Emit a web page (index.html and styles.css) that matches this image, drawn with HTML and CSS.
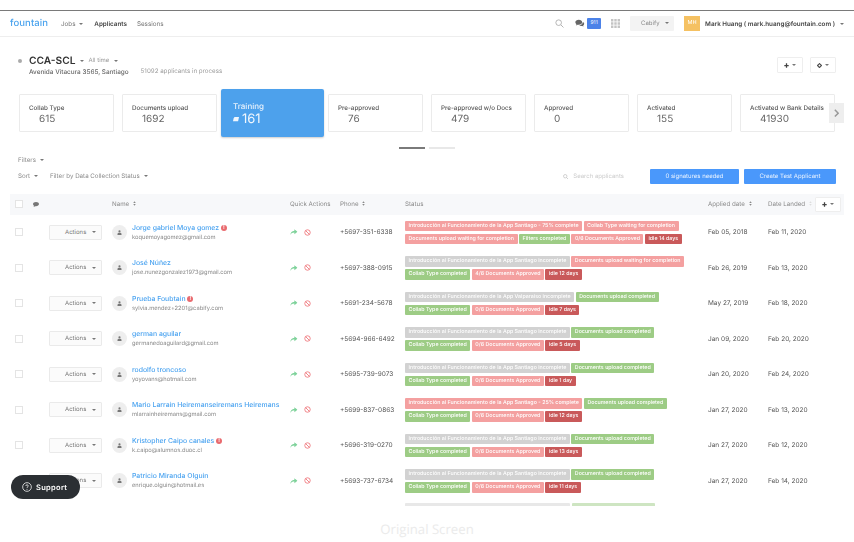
FILE: index.html
```html
<!DOCTYPE html>
<html lang="en">
<head>
    <meta charset="UTF-8">
    <title>Fountain - Applicants</title>
    <link rel="stylesheet" href="styles.css">
</head>
<body>
    <svg class="defs" width="0" height="0">
        <symbol id="i-search" viewBox="0 0 16 16"><circle cx="6.5" cy="6.5" r="5" fill="none" stroke="currentColor" stroke-width="1.5"/><path d="M10.5 10.5L15 15" stroke="currentColor" stroke-width="1.6"/></symbol>
        <symbol id="i-chat" viewBox="0 0 16 14"><path fill="currentColor" d="M6 1C3 1 .5 2.8.5 5c0 1.2.7 2.2 1.8 3l-.8 2 2.6-1.1c.6.2 1.2.2 1.9.2 3 0 5.500-1.800 5.500-4.100S9 1 6 1z"/><path fill="currentColor" d="M12.500 4.500c.1 2.800-2.600 5-5.800 5.400.8.800 2 1.200 3.300 1.200.5 0 1 0 1.500-.2l2.200 1-.6-1.800c1-.7 1.600-1.600 1.600-2.700 0-1.300-.9-2.300-2.200-2.900z"/></symbol>
        <symbol id="i-note" viewBox="0 0 12 10"><path fill="currentColor" d="M6 0C2.700 0 0 1.800 0 4.200c0 1.300.8 2.400 2 3.100L1.200 10l3.200-1.700c.5.1 1 .1 1.600.1 3.300 0 6-1.900 6-4.200S9.300 0 6 0z"/></symbol>
        <symbol id="i-grid" viewBox="0 0 9 9"><path fill="currentColor" d="M0 0h2.400v2.400H0zM3.300 0h2.400v2.400H3.300zM6.600 0H9v2.400H6.600zM0 3.300h2.400v2.400H0zM3.300 3.300h2.400v2.400H3.300zM6.600 3.300H9v2.400H6.600zM0 6.600h2.400V9H0zM3.300 6.600h2.400V9H3.300zM6.600 6.600H9V9H6.600z"/></symbol>
        <symbol id="i-plus" viewBox="0 0 8 8"><path d="M4 .5v7M.5 4h7" stroke="currentColor" stroke-width="2"/></symbol>
        <symbol id="i-gear" viewBox="0 0 8 8"><circle cx="4" cy="4" r="2.500" fill="none" stroke="currentColor" stroke-width="1.800"/><path d="M4 0v1.500M4 6.500V8M0 4h1.500M6.500 4H8" stroke="currentColor" stroke-width="1.400"/></symbol>
        <symbol id="i-user" viewBox="0 0 10 10"><circle cx="5" cy="2.700" r="2.200" fill="currentColor"/><path fill="currentColor" d="M1 10V7.800C1 6.500 2.400 5.500 5 5.500s4 1 4 2.300V10z"/></symbol>
        <symbol id="i-share" viewBox="0 0 12 10"><path fill="currentColor" d="M7 0l5 4-5 4V5.500C4 5.500 2 6.500.5 9.500.8 5.500 3 2.800 7 2.500z"/></symbol>
        <symbol id="i-ban" viewBox="0 0 10 10"><circle cx="5" cy="5" r="3.900" fill="none" stroke="currentColor" stroke-width="1.300"/><path d="M2.300 2.300l5.400 5.400" stroke="currentColor" stroke-width="1.300"/></symbol>
        <symbol id="i-sort" viewBox="0 0 6 9"><path fill="currentColor" d="M3 0l2.500 3.500h-5zM3 9L.5 5.500h5z"/></symbol>
        <symbol id="i-card" viewBox="0 0 10 8"><path fill="currentColor" d="M2.500 0H10L8.500 7H0L1 2.500z"/></symbol>
    </svg>

    <div class="screen">
        <header class="nav">
            <span class="logo">fountain</span>
            <a class="nav-link">Jobs <i class="caret"></i></a>
            <a class="nav-link nav-active">Applicants</a>
            <a class="nav-link">Sessions</a>
            <div class="nav-right">
                <svg class="ic-search"><use href="#i-search"/></svg>
                <svg class="ic-chat"><use href="#i-chat"/></svg>
                <span class="badge">911</span>
                <svg class="ic-grid"><use href="#i-grid"/></svg>
                <span class="company">Cabify <i class="caret"></i></span>
                <span class="avatar">MH</span>
                <span class="user">Mark Huang ( mark.huang@fountain.com )</span>
                <i class="caret"></i>
            </div>
        </header>

        <section class="job-head">
            <span class="job-dot"></span>
            <div class="job-info">
                <div class="job-title"><h1>CCA-SCL</h1><i class="caret"></i><span class="range">All time</span><i class="caret"></i></div>
                <div class="job-sub"><span>Avenida Vitacura 3565, Santiago</span><span class="in-process">51092 applicants in process</span></div>
            </div>
            <div class="job-btns">
                <button class="btn-light"><svg class="ic-small"><use href="#i-plus"/></svg><i class="caret"></i></button>
                <button class="btn-light"><svg class="ic-small"><use href="#i-gear"/></svg><i class="caret"></i></button>
            </div>
        </section>

        <section class="stages">
            <div class="stage"><div class="stage-name">Collab Type</div><div class="stage-num">615</div></div>
            <div class="stage"><div class="stage-name">Documents upload</div><div class="stage-num">1692</div></div>
            <div class="stage stage-active"><div class="stage-name">Training</div><div class="stage-num"><svg class="ic-card"><use href="#i-card"/></svg>161</div></div>
            <div class="stage"><div class="stage-name">Pre-approved</div><div class="stage-num">76</div></div>
            <div class="stage"><div class="stage-name">Pre-approved w/o Docs</div><div class="stage-num">479</div></div>
            <div class="stage"><div class="stage-name">Approved</div><div class="stage-num">0</div></div>
            <div class="stage"><div class="stage-name">Activated</div><div class="stage-num">155</div></div>
            <div class="stage"><div class="stage-name">Activated w Bank Details</div><div class="stage-num">41930</div></div>
            <button class="stage-next"><svg viewBox="0 0 6 10"><path d="M1 1l4 4-4 4" fill="none" stroke="currentColor" stroke-width="1.800"/></svg></button>
        </section>

        <div class="pager"><span class="pager-on"></span><span></span></div>

        <section class="filters">
            <div class="filter-line">Filters <i class="caret"></i></div>
            <div class="tools">
                <span class="filter-item">Sort <i class="caret"></i></span>
                <span class="filter-item">Filter by Data Collection Status <i class="caret"></i></span>
                <span class="search"><svg class="ic-search-sm"><use href="#i-search"/></svg>Search applicants</span>
                <button class="btn-blue btn-sign">0 signatures needed</button>
                <button class="btn-blue btn-test">Create Test Applicant</button>
            </div>
        </section>

        <section class="table">
            <div class="row head">
                <div class="cell-check"><span class="check"></span><svg class="ic-note"><use href="#i-note"/></svg></div>
                <div></div>
                <div>Name <svg class="ic-sort"><use href="#i-sort"/></svg></div>
                <div>Quick Actions</div>
                <div>Phone <svg class="ic-sort"><use href="#i-sort"/></svg></div>
                <div>Status</div>
                <div>Applied date <svg class="ic-sort"><use href="#i-sort"/></svg></div>
                <div class="cell-landed"><span>Date Landed <svg class="ic-sort ic-faint"><use href="#i-sort"/></svg></span><button class="btn-light btn-add"><svg class="ic-small"><use href="#i-plus"/></svg><i class="caret"></i></button></div>
            </div>

            <div class="row">
                <div class="cell-check"><span class="check"></span></div>
                <div class="cell-actions"><button class="btn-actions">Actions <i class="caret"></i></button></div>
                <div class="person">
                    <span class="person-pic"><svg><use href="#i-user"/></svg></span>
                    <div><div class="person-name">Jorge gabriel Moya gomez <span class="alert">!</span></div><div class="person-mail">koquemoyagomez@gmail.com</div></div>
                </div>
                <div class="quick"><svg class="ic-share"><use href="#i-share"/></svg><svg class="ic-ban"><use href="#i-ban"/></svg></div>
                <div class="phone">+5697-351-6338</div>
                <div class="tags"><span class="tag pink">Introducción al Funcionamiento de la App Santiago - 75% complete</span><span class="tag pink">Collab Type waiting for completion</span><span class="tag pink">Documents upload waiting for completion</span><span class="tag green">Filters completed</span><span class="tag pink">0/6 Documents Approved</span><span class="tag red">idle 14 days</span></div>
                <div class="date">Feb 05, 2018</div>
                <div class="date">Feb 11, 2020</div>
            </div>

            <div class="row">
                <div class="cell-check"><span class="check"></span></div>
                <div class="cell-actions"><button class="btn-actions">Actions <i class="caret"></i></button></div>
                <div class="person">
                    <span class="person-pic"><svg><use href="#i-user"/></svg></span>
                    <div><div class="person-name">José Núñez</div><div class="person-mail">jose.nunezgonzalez1973@gmail.com</div></div>
                </div>
                <div class="quick"><svg class="ic-share"><use href="#i-share"/></svg><svg class="ic-ban"><use href="#i-ban"/></svg></div>
                <div class="phone">+5697-388-0915</div>
                <div class="tags"><span class="tag gray">Introducción al Funcionamiento de la App Santiago incomplete</span><span class="tag pink">Documents upload waiting for completion</span><span class="tag green">Collab Type completed</span><span class="tag pink">4/6 Documents Approved</span><span class="tag red">idle 12 days</span></div>
                <div class="date">Feb 26, 2019</div>
                <div class="date">Feb 13, 2020</div>
            </div>

            <div class="row">
                <div class="cell-check"><span class="check"></span></div>
                <div class="cell-actions"><button class="btn-actions">Actions <i class="caret"></i></button></div>
                <div class="person">
                    <span class="person-pic"><svg><use href="#i-user"/></svg></span>
                    <div><div class="person-name">Prueba Foubtain <span class="alert">!</span></div><div class="person-mail">sylvia.mendez+2201@cabify.com</div></div>
                </div>
                <div class="quick"><svg class="ic-share"><use href="#i-share"/></svg><svg class="ic-ban"><use href="#i-ban"/></svg></div>
                <div class="phone">+5691-234-5678</div>
                <div class="tags"><span class="tag gray">Introducción al Funcionamiento de la App Valparaíso incomplete</span><span class="tag green">Documents upload completed</span><span class="tag green">Collab Type completed</span><span class="tag pink">0/6 Documents Approved</span><span class="tag red">idle 7 days</span></div>
                <div class="date">May 27, 2019</div>
                <div class="date">Feb 18, 2020</div>
            </div>

            <div class="row">
                <div class="cell-check"><span class="check"></span></div>
                <div class="cell-actions"><button class="btn-actions">Actions <i class="caret"></i></button></div>
                <div class="person">
                    <span class="person-pic"><svg><use href="#i-user"/></svg></span>
                    <div><div class="person-name">german aguilar</div><div class="person-mail">germanedoaguilard@gmail.com</div></div>
                </div>
                <div class="quick"><svg class="ic-share"><use href="#i-share"/></svg><svg class="ic-ban"><use href="#i-ban"/></svg></div>
                <div class="phone">+5694-966-6492</div>
                <div class="tags"><span class="tag gray">Introducción al Funcionamiento de la App Santiago incomplete</span><span class="tag green">Documents upload completed</span><span class="tag green">Collab Type completed</span><span class="tag pink">0/6 Documents Approved</span><span class="tag red">idle 5 days</span></div>
                <div class="date">Jan 09, 2020</div>
                <div class="date">Feb 20, 2020</div>
            </div>

            <div class="row">
                <div class="cell-check"><span class="check"></span></div>
                <div class="cell-actions"><button class="btn-actions">Actions <i class="caret"></i></button></div>
                <div class="person">
                    <span class="person-pic"><svg><use href="#i-user"/></svg></span>
                    <div><div class="person-name">rodolfo troncoso</div><div class="person-mail">yoyovans@hotmail.com</div></div>
                </div>
                <div class="quick"><svg class="ic-share"><use href="#i-share"/></svg><svg class="ic-ban"><use href="#i-ban"/></svg></div>
                <div class="phone">+5695-739-9073</div>
                <div class="tags"><span class="tag gray">Introducción al Funcionamiento de la App Santiago incomplete</span><span class="tag green">Documents upload completed</span><span class="tag green">Collab Type completed</span><span class="tag pink">0/6 Documents Approved</span><span class="tag red">idle 1 day</span></div>
                <div class="date">Jan 20, 2020</div>
                <div class="date">Feb 24, 2020</div>
            </div>

            <div class="row">
                <div class="cell-check"><span class="check"></span></div>
                <div class="cell-actions"><button class="btn-actions">Actions <i class="caret"></i></button></div>
                <div class="person">
                    <span class="person-pic"><svg><use href="#i-user"/></svg></span>
                    <div><div class="person-name">Mario Larrain Heiremanseiremans Heiremans</div><div class="person-mail">mlarrainheiremans@gmail.com</div></div>
                </div>
                <div class="quick"><svg class="ic-share"><use href="#i-share"/></svg><svg class="ic-ban"><use href="#i-ban"/></svg></div>
                <div class="phone">+5699-837-0863</div>
                <div class="tags"><span class="tag pink">Introducción al Funcionamiento de la App Santiago - 25% complete</span><span class="tag green">Documents upload completed</span><span class="tag green">Collab Type completed</span><span class="tag pink">0/6 Documents Approved</span><span class="tag red">idle 12 days</span></div>
                <div class="date">Jan 27, 2020</div>
                <div class="date">Feb 13, 2020</div>
            </div>

            <div class="row">
                <div class="cell-check"><span class="check"></span></div>
                <div class="cell-actions"><button class="btn-actions">Actions <i class="caret"></i></button></div>
                <div class="person">
                    <span class="person-pic"><svg><use href="#i-user"/></svg></span>
                    <div><div class="person-name">Kristopher Caipo canales <span class="alert">!</span></div><div class="person-mail">k.caipo@alumnos.duoc.cl</div></div>
                </div>
                <div class="quick"><svg class="ic-share"><use href="#i-share"/></svg><svg class="ic-ban"><use href="#i-ban"/></svg></div>
                <div class="phone">+5696-319-0270</div>
                <div class="tags"><span class="tag gray">Introducción al Funcionamiento de la App Santiago incomplete</span><span class="tag green">Documents upload completed</span><span class="tag green">Collab Type completed</span><span class="tag pink">0/6 Documents Approved</span><span class="tag red">idle 13 days</span></div>
                <div class="date">Jan 27, 2020</div>
                <div class="date">Feb 12, 2020</div>
            </div>

            <div class="row">
                <div class="cell-check"><span class="check"></span></div>
                <div class="cell-actions"><button class="btn-actions">Actions <i class="caret"></i></button></div>
                <div class="person">
                    <span class="person-pic"><svg><use href="#i-user"/></svg></span>
                    <div><div class="person-name">Patricio Miranda Olguin</div><div class="person-mail">enrique.olguin@hotmail.es</div></div>
                </div>
                <div class="quick"><svg class="ic-share"><use href="#i-share"/></svg><svg class="ic-ban"><use href="#i-ban"/></svg></div>
                <div class="phone">+5693-737-6734</div>
                <div class="tags"><span class="tag gray">Introducción al Funcionamiento de la App Santiago incomplete</span><span class="tag green">Documents upload completed</span><span class="tag green">Collab Type completed</span><span class="tag pink">0/6 Documents Approved</span><span class="tag red">idle 11 days</span></div>
                <div class="date">Jan 27, 2020</div>
                <div class="date">Feb 14, 2020</div>
            </div>

            <div class="row row-cut">
                <div></div><div></div><div></div><div></div><div></div>
                <div class="tags"><span class="tag gray tag-cut-a"></span><span class="tag green tag-cut-b"></span></div>
            </div>
        </section>

        <button class="support"><svg viewBox="0 0 12 12"><circle cx="6" cy="6" r="5.200" fill="none" stroke="currentColor" stroke-width="0.900"/><path d="M4.500 4.800C4.500 3.900 5.200 3.300 6 3.300s1.500.6 1.500 1.400C7.500 5.800 6 5.800 6 7.100" fill="none" stroke="currentColor" stroke-width="0.900"/><circle cx="6" cy="8.800" r="0.600" fill="currentColor"/></svg>Support</button>
    </div>

    <footer class="caption">Original Screen</footer>
</body>
</html>
```

FILE: styles.css
```css
* { box-sizing: border-box; }
html, body { margin: 0; padding: 0; }
body {
    width: 854px;
    height: 542px;
    overflow: hidden;
    background: #fff;
    font-family: Inter, "Liberation Sans", sans-serif;
    color: #555;
    text-rendering: geometricPrecision;
}
button { font-family: inherit; cursor: pointer; text-rendering: inherit; }
.defs { position: absolute; }

.screen {
    position: relative;
    height: 506px;
    padding-top: 10px;
    overflow: hidden;
    filter: blur(0.35px);
}

.caret {
    display: inline-block;
    width: 0;
    height: 0;
    margin-left: 2px;
    vertical-align: middle;
    border-left: 2px solid transparent;
    border-right: 2px solid transparent;
    border-top: 2px solid #777;
}

/* top bar */
.nav {
    display: flex;
    align-items: center;
    height: 27px;
    padding: 0 10px;
    border-top: 1.5px solid #7a7a7a;
    border-bottom: 1px solid #eee;
    font-size: 6.300px;
}
.logo { width: 51px; font-size: 9.500px; font-weight: 500; color: #4aa3ee; letter-spacing: 0.1px; }
.nav-link { margin-right: 10px; color: #777; }
.nav-link:nth-child(2) { margin-right: 11px; }
.nav-active { color: #444; font-weight: 600; }
.nav-right { display: flex; align-items: center; margin-left: auto; color: #999; }
.ic-search { width: 9px; height: 9px; margin-right: 11px; color: #aaa; }
.ic-chat { width: 10px; height: 9px; margin-right: 2px; color: #666; }
.badge { width: 14px; height: 11px; margin-right: 10px; background: #4c82e8; border-radius: 1px; color: #fff; font-size: 5px; line-height: 11px; text-align: center; }
.ic-grid { width: 9px; height: 9px; margin-right: 10px; color: #c4c4c4; }
.company { width: 44px; height: 15px; margin-right: 10px; padding-left: 11px; background: #f3f3f3; border-radius: 1px; color: #888; font-size: 6px; line-height: 15px; }
.company .caret { margin-left: 4px; }
.avatar { width: 16px; height: 15px; margin-right: 5px; background: #f5c162; color: #fff; font-size: 5.500px; line-height: 15px; text-align: center; }
.user { margin-right: 3px; color: #444; font-size: 6.300px; font-weight: 600; }

/* job heading */
.job-head {
    display: flex;
    align-items: flex-start;
    height: 52px;
    padding: 17px 18px 0;
}
.job-dot { width: 4px; height: 4px; margin: 5px 7px 0 0; background: #aaa; border-radius: 50%; }
.job-title { display: flex; align-items: center; height: 13px; }
.job-title h1 { margin: 0 3px 0 0; color: #333; font-size: 10.200px; font-weight: 600; }
.range { margin: 0 3px 0 4px; color: #999; font-size: 6px; }
.job-sub { display: flex; gap: 12px; margin-top: 1px; color: #999; font-size: 6.200px; }
.job-sub span:first-child { color: #666; font-size: 6.400px; font-weight: 500; }
.job-btns { display: flex; gap: 7px; margin: 3px 0 0 auto; }
.btn-light {
    display: flex;
    align-items: center;
    justify-content: center;
    width: 26px;
    height: 16px;
    padding: 0;
    background: #fff;
    border: 1px solid #eee;
    border-radius: 1px;
    color: #444;
}
.ic-small { width: 5px; height: 5px; margin-right: 1px; }

/* stage cards */
.stages {
    position: relative;
    display: flex;
    align-items: center;
    gap: 8px;
    height: 48px;
    padding-left: 19px;
}
.stage {
    flex: none;
    width: 95px;
    height: 38px;
    padding: 9px 0 0 9px;
    background: #fff;
    border: 1px solid #ebebeb;
    border-radius: 1px;
    white-space: nowrap;
}
.stage-name { color: #555; font-size: 6.250px; font-weight: 500; line-height: 8px; }
.stage-num { margin: 2px 0 0 10px; color: #666; font-size: 10px; line-height: 11px; }
.stage-active {
    width: 103px;
    height: 48px;
    margin: 0 -4px;
    padding: 12px 0 0 12px;
    background: #4da1ec;
    border: none;
    border-radius: 2px;
    box-shadow: 0 1px 2px rgba(0, 0, 0, 0.2);
}
.stage-active .stage-name { color: #e8f2fc; font-size: 8px; line-height: 11px; }
.stage-active .stage-num { margin: 0; color: #f0f6fd; font-size: 13px; line-height: 14px; }
.ic-card { width: 6px; height: 5px; margin-right: 3px; vertical-align: 1px; }
.stage-next {
    position: absolute;
    top: 14px;
    left: 829px;
    width: 15px;
    height: 20px;
    padding: 0 5px;
    background: #eee;
    border: none;
    color: #999;
}
.stage-next svg { display: block; }

.pager { display: flex; justify-content: center; gap: 4px; margin-top: 10px; }
.pager span { width: 26px; height: 2px; background: #e8e8e8; }
.pager .pager-on { background: #7a7a7a; }

/* filters */
.filters { padding: 7px 18px 0; color: #888; font-size: 6.200px; }
.filter-line { height: 10px; line-height: 10px; }
.tools { display: flex; align-items: center; height: 15px; margin-top: 3px; }
.filter-item { margin-right: 12px; }
.search { display: flex; align-items: center; margin-left: auto; color: #ccc; font-size: 6px; }
.ic-search-sm { width: 5.500px; height: 5.500px; margin-right: 5px; color: #aaa; }
.btn-blue { height: 15px; padding: 0; background: #4a98fb; border: none; border-radius: 1px; color: #e8f2ff; font-size: 6px; }
.btn-sign { width: 89px; margin: 0 5px 0 26px; }
.btn-test { width: 92px; }

/* applicants table */
.table { margin: 10px 10px 0; }
.row {
    display: grid;
    grid-template-columns: 39px 63px 178px 50px 65px 303px 60px 76px;
    align-items: center;
    height: 35.500px;
    white-space: nowrap;
}
.head { height: 20.500px; background: #f7f8fa; color: #888; font-size: 6.200px; }
.ic-sort { width: 3px; height: 5px; margin-left: 2px; color: #888; vertical-align: -0.500px; }
.ic-faint { color: #ddd; }
.cell-check { display: flex; align-items: center; padding-left: 5px; }
.check { width: 8px; height: 8px; background: #fff; border: 1px solid #e4e4e4; }
.ic-note { width: 6px; height: 5px; margin-left: 10px; color: #777; }
.cell-landed { display: flex; align-items: center; justify-content: space-between; padding-right: 3px; }
.btn-add { width: 26px; height: 15px; }
.cell-actions { display: flex; }
.btn-actions {
    width: 53px;
    height: 15px;
    padding: 0 0 0 15px;
    background: #fbfbfb;
    border: 1px solid #eaeaea;
    border-radius: 1px;
    color: #777;
    font-size: 6px;
    text-align: left;
}
.btn-actions .caret { margin-left: 4px; }
.person { display: flex; align-items: center; gap: 5px; }
.person-pic { display: flex; align-items: center; justify-content: center; width: 15px; height: 15px; background: #eee; border-radius: 50%; color: #777; }
.person-pic svg { width: 5px; height: 5px; }
.person-name { color: #4aa3f0; font-size: 6.850px; font-weight: 500; line-height: 9px; }
.person-mail { margin-top: 2px; color: #888; font-size: 5.750px; line-height: 8px; }
.alert { display: inline-block; width: 6px; height: 6px; background: #e96a6e; border-radius: 50%; color: #fff; font-size: 5px; font-weight: 700; line-height: 6px; text-align: center; vertical-align: 0.500px; }
.quick { display: flex; align-items: center; gap: 6px; }
.ic-share { width: 7.500px; height: 6.500px; color: #7ed29a; }
.ic-ban { width: 7px; height: 7px; color: #ef7b80; }
.phone, .date { color: #555; font-size: 6.500px; }
.tags { display: flex; flex-wrap: wrap; gap: 2.500px 1.500px; align-content: center; }
.tag { height: 10.500px; padding: 0 3.500px; border-radius: 1px; color: #fff; font-size: 5.300px; font-weight: 500; line-height: 10.500px; }
.pink { background: #f4a0a0; }
.green { background: #9dcc85; }
.gray { background: #d2d2d2; }
.red { background: #c9595a; }
.row-cut { align-items: start; opacity: 0.5; }
.row-cut .tags { padding-top: 4px; }
.tag-cut-a { width: 165px; }
.tag-cut-b { width: 83px; }

.support {
    position: absolute;
    top: 475px;
    left: 11px;
    display: flex;
    align-items: center;
    width: 69px;
    height: 24px;
    padding: 0 0 0 11px;
    background: #2b2f33;
    border: none;
    border-radius: 12px;
    color: #fff;
    font-size: 7.500px;
    font-weight: 600;
    letter-spacing: 0.300px;
}
.support svg { width: 10px; height: 10px; margin-right: 4px; }

.caption {
    padding-top: 14px;
    color: #ebebeb;
    font-family: "Open Sans", sans-serif;
    font-size: 13.200px;
    line-height: 18px;
    text-align: center;
}
```
